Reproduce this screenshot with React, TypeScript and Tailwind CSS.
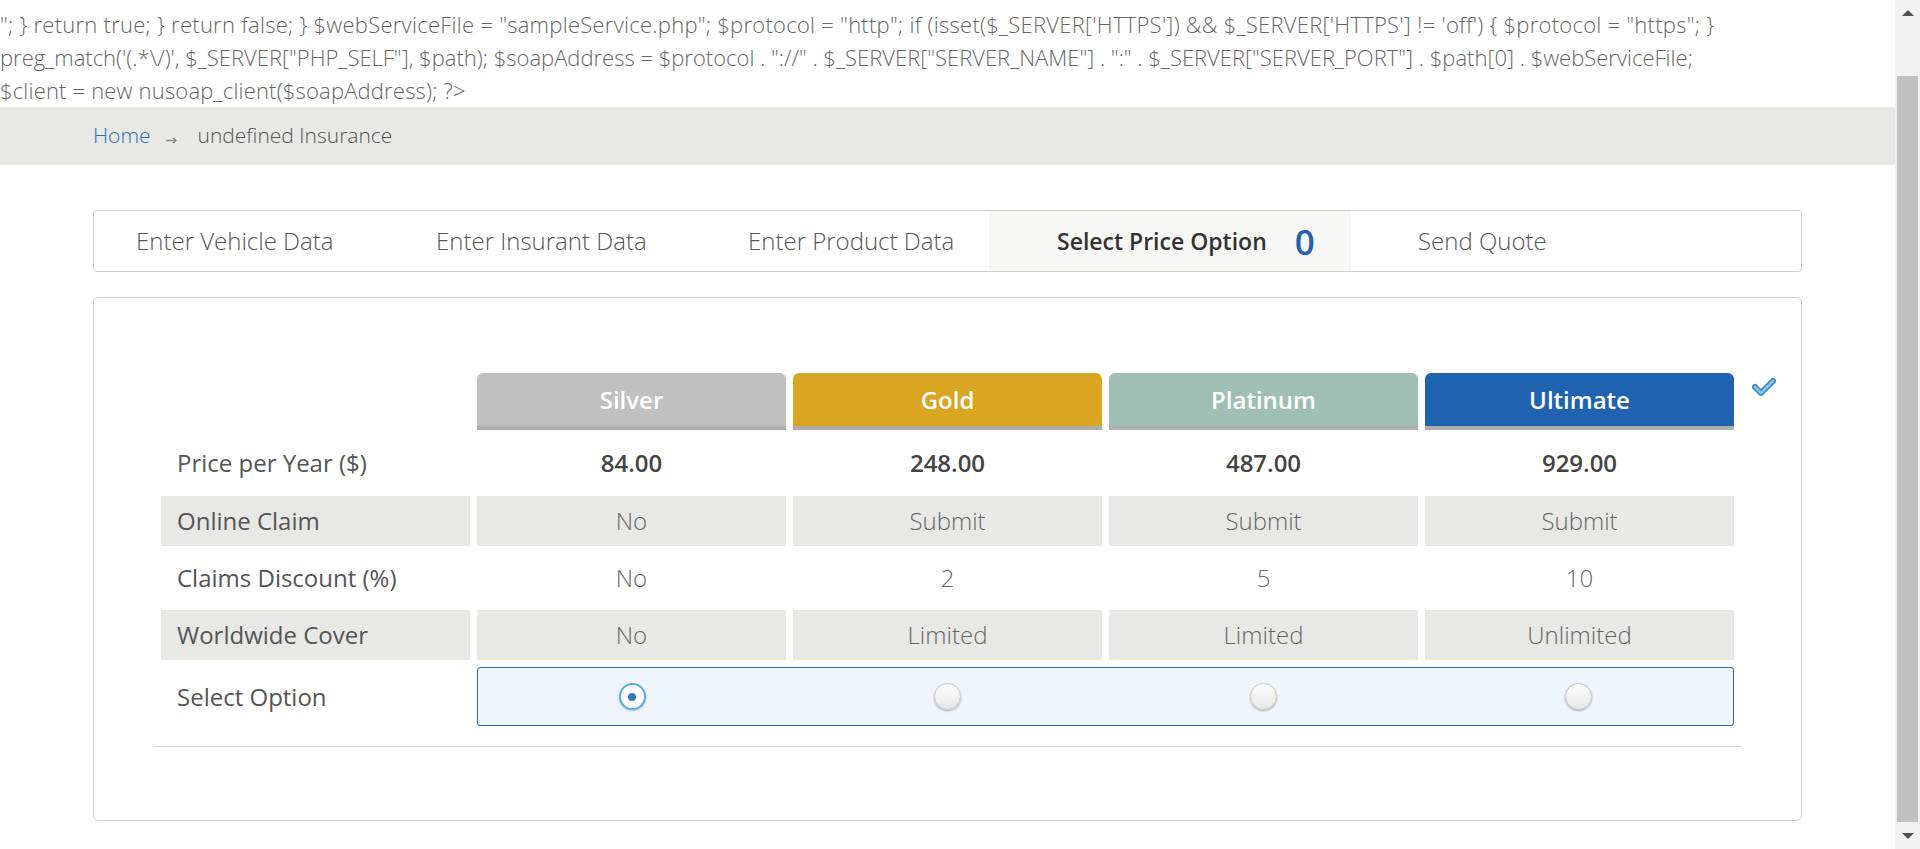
import React from 'react'

const PLANS = [
  { name: 'Silver', color: 'bg-[#c0c0c0]', price: '84.00', claim: 'No', discount: 'No', cover: 'No' },
  { name: 'Gold', color: 'bg-[#daa520]', price: '248.00', claim: 'Submit', discount: '2', cover: 'Limited' },
  { name: 'Platinum', color: 'bg-[#a0bfb4]', price: '487.00', claim: 'Submit', discount: '5', cover: 'Limited' },
  { name: 'Ultimate', color: 'bg-[#1f62b0]', price: '929.00', claim: 'Submit', discount: '10', cover: 'Unlimited' },
]

// the stray php that leaks onto the page above the breadcrumb
const LINES = [
  {
    text: `"; } return true; } return false; } $webServiceFile = "sampleService.php"; $protocol = "http"; if (isset($_SERVER['HTTPS']) && $_SERVER['HTTPS'] != 'off') { $protocol = "https"; }`,
    track: 'tracking-[0.26px]',
  },
  {
    text: `preg_match('(.*\\/)', $_SERVER["PHP_SELF"], $path); $soapAddress = $protocol . "://" . $_SERVER["SERVER_NAME"] . ":" . $_SERVER["SERVER_PORT"] . $path[0] . $webServiceFile;`,
    track: 'tracking-normal',
  },
  { text: `$client = new nusoap_client($soapAddress); ?>`, track: 'tracking-[0.18px]' },
]

function Check() {
  return (
    <svg width="26" height="20" viewBox="0 0 26 20" aria-hidden="true">
      <path d="M4 10 L10 16 L22 4" fill="none" stroke="#3a86bf" strokeWidth="6" strokeLinecap="round" strokeLinejoin="round" />
      <path d="M4 10 L10 16 L22 4" fill="none" stroke="#86c8ef" strokeWidth="2.6" strokeLinecap="round" strokeLinejoin="round" />
    </svg>
  )
}

function Radio({ checked }: { checked?: boolean }) {
  if (checked) {
    return (
      <span className="flex h-[27px] w-[27px] items-center justify-center rounded-full border-[2px] border-[#5aaede] bg-white shadow-[0_1px_2px_rgba(0,0,0,0.25)]">
        <span className="h-[8px] w-[8px] rounded-full bg-[#2f7fb5]" />
      </span>
    )
  }
  return (
    <span className="block h-[27px] w-[27px] rounded-full border border-[#c4c4c4] bg-gradient-to-b from-white to-[#e6e6e6] shadow-[0_1px_2px_rgba(0,0,0,0.3)]" />
  )
}

function Scrollbar() {
  return (
    <div className="flex w-[25px] shrink-0 flex-col bg-[#f1f1f1]">
      <div className="flex h-[25px] items-center justify-center">
        <span className="h-0 w-0 border-x-[6px] border-b-[6px] border-x-transparent border-b-[#505050]" />
      </div>
      <div className="mx-[2px] mt-[51px] h-[746px] bg-[#c1c1c1]" />
      <div className="flex flex-1 items-center justify-center">
        <span className="h-0 w-0 border-x-[6px] border-t-[6px] border-x-transparent border-t-[#505050]" />
      </div>
    </div>
  )
}

export default function App() {
  return (
    <div className="flex h-[849px] w-[1920px] overflow-hidden bg-white font-['Open_Sans','Liberation_Sans',sans-serif]">
      <div className="min-w-0 flex-1">
        {/* leaked code */}
        <div className="whitespace-nowrap pt-[8px] text-[22px] font-light leading-[33px] text-[#666]">
          {LINES.map((l) => (
            <div key={l.text} className={l.track}>
              {l.text}
            </div>
          ))}
        </div>

        {/* breadcrumb */}
        <div className="flex h-[58px] items-center bg-[#e8e8e4] pl-[93px] text-[21px] font-light">
          <span className="text-[#2a6ebb]">Home</span>
          <svg className="ml-[15px] mt-[8px]" width="11" height="7" viewBox="0 0 11 7" aria-hidden="true">
            <path d="M0 3.5 H9.5 M7 1 L10 3.5 L7 6" fill="none" stroke="#8a8a8a" strokeWidth="1.4" />
          </svg>
          <span className="ml-[21px] text-[#555]">undefined Insurance</span>
        </div>

        <div className="mx-[93px] mt-[45px]">
          {/* wizard steps */}
          <div className="flex h-[62px] items-stretch rounded-[4px] border border-[#cfcfcf] text-[24px] font-light text-[#555]">
            <div className="flex w-[342px] items-center pl-[42px]">Enter Vehicle Data</div>
            <div className="flex w-[312px] items-center">Enter Insurant Data</div>
            <div className="flex w-[241px] items-center">Enter Product Data</div>
            <div className="flex w-[362px] items-center bg-[#f7f7f5] pl-[68px] font-semibold text-[#333]">
              <span className="text-[23px]">Select Price Option</span>
              <span className="ml-[28px] text-[35px] font-semibold leading-none text-[#1f62b0]">0</span>
            </div>
            <div className="flex items-center pl-[67px]">Send Quote</div>
          </div>

          {/* price table */}
          <div className="mt-[25px] h-[524px] rounded-[5px] border border-[#cfcfcf] px-[60px] pt-[68px]">
            <table className="w-full table-fixed border-separate border-spacing-[7px] text-[24px]">
              <colgroup>
                <col className="w-[309px]" />
                <col className="w-[309px]" />
                <col className="w-[309px]" />
                <col className="w-[309px]" />
                <col className="w-[309px]" />
              </colgroup>
              <thead>
                <tr>
                  <th className="p-0" />
                  {PLANS.map((p, i) => (
                    <th key={p.name} className="relative p-0">
                      <div className={`flex h-[53px] items-center justify-center rounded-t-[6px] ${p.color} font-semibold text-white`}>
                        {p.name}
                      </div>
                      <div className="h-[4px] bg-[#aeaeae]" />
                      {i === 3 && (
                        <span className="absolute left-[calc(100%+17px)] top-[4px]">
                          <Check />
                        </span>
                      )}
                    </th>
                  ))}
                </tr>
              </thead>
              <tbody>
                <tr className="h-[52px]">
                  <td className="p-0 pl-[16px] text-[#555]">Price per Year ($)</td>
                  {PLANS.map((p) => (
                    <td key={p.name} className="p-0 text-center font-semibold text-[#444]">{p.price}</td>
                  ))}
                </tr>
                <tr className="h-[50px]">
                  <td className="bg-[#e8e8e4] p-0 pl-[16px] text-[#555]">Online Claim</td>
                  {PLANS.map((p) => (
                    <td key={p.name} className="bg-[#e8e8e4] p-0 text-center font-light text-[#666]">{p.claim}</td>
                  ))}
                </tr>
                <tr className="h-[50px]">
                  <td className="p-0 pl-[16px] text-[#555]">Claims Discount (%)</td>
                  {PLANS.map((p) => (
                    <td key={p.name} className="p-0 text-center font-light text-[#666]">{p.discount}</td>
                  ))}
                </tr>
                <tr className="h-[50px]">
                  <td className="bg-[#e8e8e4] p-0 pl-[16px] text-[#555]">Worldwide Cover</td>
                  {PLANS.map((p) => (
                    <td key={p.name} className="bg-[#e8e8e4] p-0 text-center font-light text-[#666]">{p.cover}</td>
                  ))}
                </tr>
                <tr>
                  <td className="h-[59px] p-0 pl-[16px] text-[#555]">Select Option</td>
                  <td colSpan={4} className="p-0">
                    <div className="grid h-[59px] grid-cols-4 gap-[7px] rounded-[3px] border border-[#2a69b5] bg-[#eef5fd]">
                      {PLANS.map((p, i) => (
                        <div key={p.name} className="flex items-center justify-center">
                          <Radio checked={i === 0} />
                        </div>
                      ))}
                    </div>
                  </td>
                </tr>
              </tbody>
            </table>
            <div className="mt-[13px] h-px bg-[#dcdcdc]" />
          </div>
        </div>
      </div>
      <Scrollbar />
    </div>
  )
}
